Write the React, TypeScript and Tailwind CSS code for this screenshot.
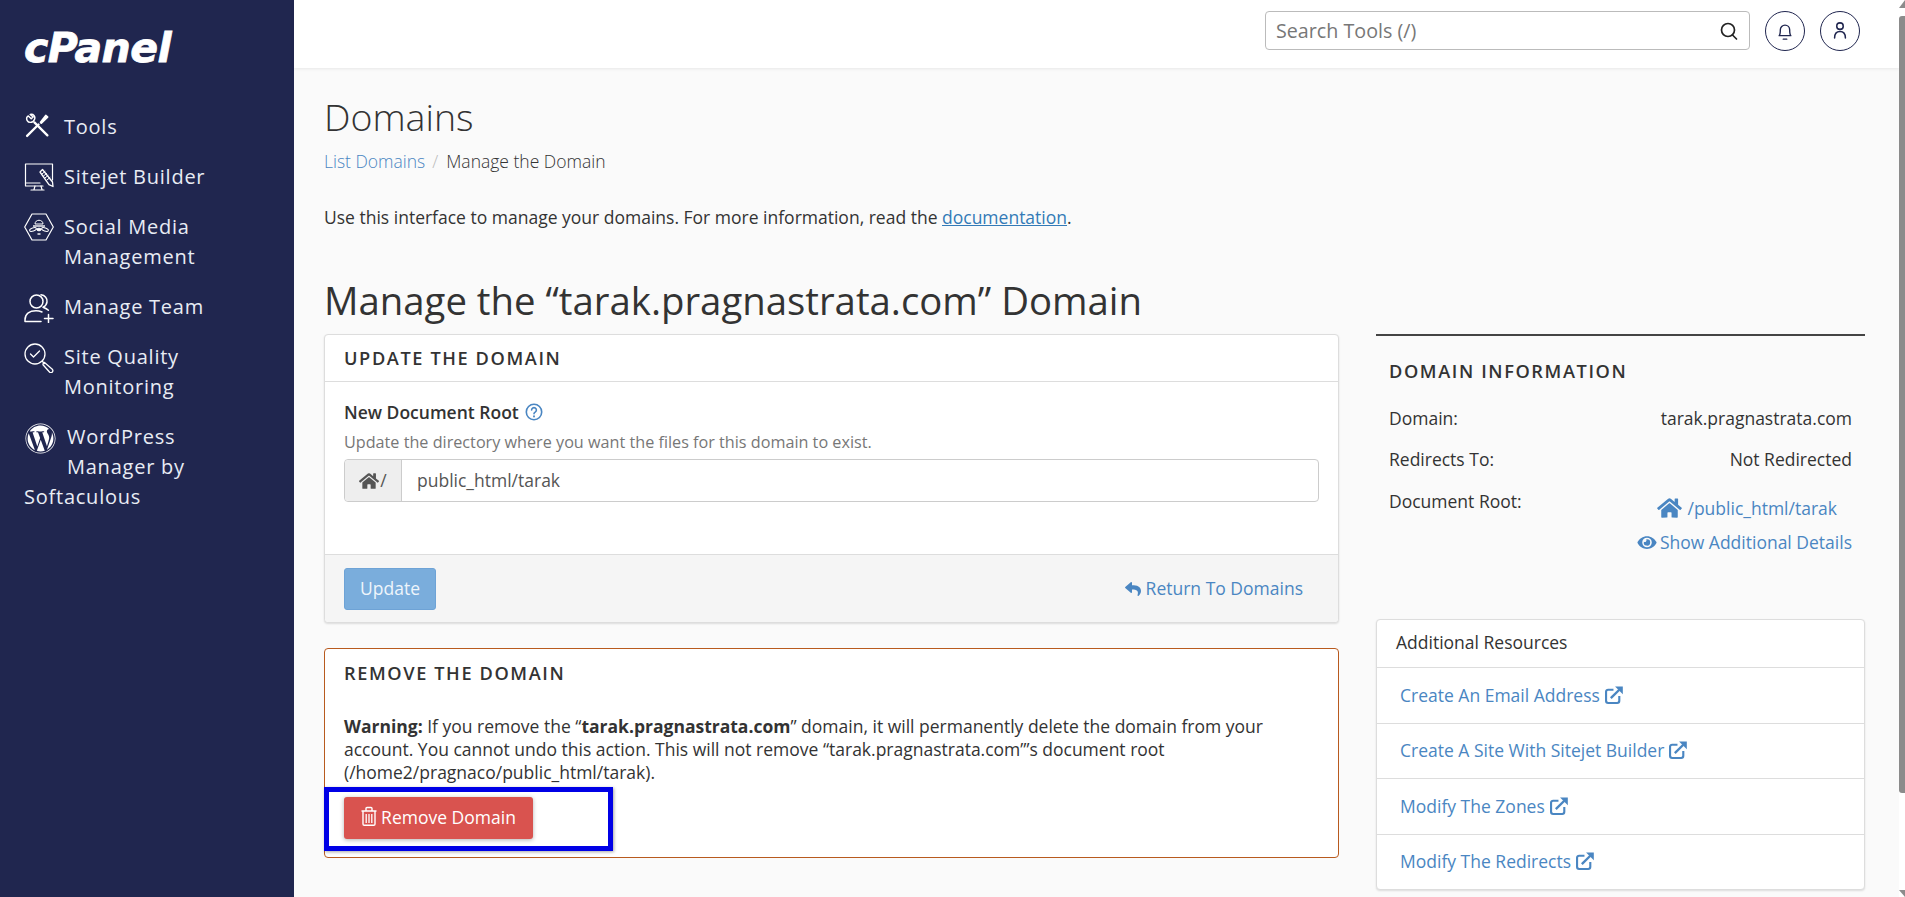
import React from 'react';
import { FaHome, FaEye, FaReply, FaWordpress } from 'react-icons/fa';

const ToolsIcon = () => (
  <svg viewBox="0 0 24 24" className="h-[25px] w-[25px] ml-[1px]" fill="none" stroke="white" strokeWidth="1.8" strokeLinecap="round" strokeLinejoin="round">
    <path d="M9 9l12.5 12.5" strokeWidth="2.2" />
    <path d="M3.2 2.8 6 5.6 7.8 3.8 5 1.4C8 .5 10.2 3.2 9.2 6 8.6 7.8 7.2 9 5 9 2.5 9 .8 6 2 3.8z" strokeWidth="1.4" fill="none" />
    <path d="M2 22 13 11" strokeWidth="2.2" />
    <path d="M15 9l5-6.5 1.6 1.4L15.6 9.6z" fill="white" />
  </svg>
);

const MonitorIcon = () => (
  <svg viewBox="0 0 30 30" className="h-[30px] w-[30px]" fill="none" stroke="white" strokeWidth="1.2" strokeLinejoin="round" strokeLinecap="round">
    <path d="M19 23H1.5V1h27v16" />
    <path d="M1.5 20H16" />
    <path d="M11 23l-1 3.5M17 23l1 3.5M7 27h13" />
    <path d="M16 9l2.5-2.5L28.5 19l.5 4.5-4-1.8z" strokeWidth="1.3" />
    <path d="M18 11l3-2.5M19.5 13l3-2.5M21 15l3-2.5M23 17l3-2.5" strokeWidth="1" />
  </svg>
);

const SocialIcon = () => (
  <svg viewBox="0 0 30 28" className="h-[28px] w-[30px]" fill="none" stroke="white" strokeWidth="1" strokeLinejoin="round">
    <path d="M8 1h14l7.3 13L22 27H8L.7 14z" strokeWidth="1.2" />
    <path d="M11 11c0-5 8-5 8 0z" />
    <path d="M9 13h12" strokeWidth="1.4" />
    <ellipse cx="9" cy="16.5" rx="3.5" ry="1.6" transform="rotate(-18 9 16.5)" />
    <ellipse cx="21" cy="16.5" rx="3.5" ry="1.6" transform="rotate(18 21 16.5)" />
    <ellipse cx="15" cy="16.5" rx="2.2" ry="1.3" fill="white" />
    <path d="M13.5 21h3" strokeWidth="1.4" />
  </svg>
);

const TeamIcon = () => (
  <svg viewBox="0 0 30 30" className="h-[30px] w-[30px]" fill="none" stroke="white" strokeWidth="1.5" strokeLinecap="round" strokeLinejoin="round">
    <circle cx="12.5" cy="8.5" r="6.5" />
    <path d="M17 1.8c4 .5 6.5 3.5 6 7-.3 2.5-2 4.5-4 5.4 2 .8 4 1.6 5.4 3" />
    <path d="M18 19c-2-.9-3.5-1.3-6-1.3C6 17.700 1 20.500 1 27v1.500h16" />
    <path d="M24.500 21.500v8M20.500 25.500h8.500" />
  </svg>
);

const QualityIcon = () => (
  <svg viewBox="0 0 30 30" className="h-[30px] w-[30px]" fill="none" stroke="white" strokeWidth="1.3" strokeLinecap="round" strokeLinejoin="round">
    <circle cx="11" cy="11" r="10" />
    <path d="M6.500 11l3 3 6-6" />
    <path d="M18.500 18.500l2 2" />
    <path d="M20.500 19.500l7.800 6.800a2 2 0 0 1-2.600 3l-6.700-7.600a2 2 0 0 1 1.500-2.200z" />
  </svg>
);

const ExternalIcon = () => (
  <svg viewBox="0 0 17 17" className="ml-[5px] inline-block h-[18px] w-[18px] align-[-2px]" fill="none" stroke="#4a86c2">
    <path d="M8 3.500H3a2 2 0 0 0-2 2V14a2 2 0 0 0 2 2h8.500a2 2 0 0 0 2-2V9.500" strokeWidth="2" />
    <path d="M5.500 11.500 13.500 3.500" strokeWidth="2.200" />
    <path d="M9.500.500H16.800V7.800z" fill="#4a86c2" stroke="none" />
  </svg>
);

const TrashIcon = () => (
  <svg viewBox="0 0 16 20" className="h-[20px] w-[16px] -translate-y-[2px]" fill="none" stroke="#fff">
    <path d="M.500 5h15M5 5V2.500a1 1 0 0 1 1-1h4a1 1 0 0 1 1 1V5" strokeWidth="1.400" />
    <path d="M2 5v13a1.200 1.200 0 0 0 1.200 1.200h9.600A1.200 1.200 0 0 0 14 18V5" strokeWidth="1.400" />
    <path d="M5.200 8v9M8 8v9M10.800 8v9" strokeWidth="1.300" />
  </svg>
);

const navItems = [
  { label: 'Tools', icon: <ToolsIcon /> },
  { label: 'Sitejet Builder', icon: <MonitorIcon /> },
  { label: 'Social Media Management', icon: <SocialIcon /> },
  { label: 'Manage Team', icon: <TeamIcon /> },
  { label: 'Site Quality Monitoring', icon: <QualityIcon /> },
];

const resources = ['Create An Email Address', 'Create A Site With Sitejet Builder', 'Modify The Zones', 'Modify The Redirects'];

const panelTitle = 'text-[18.2px] font-semibold uppercase tracking-[1.6px] text-[#333]';

export default function App() {
  return (
    <div className="flex h-screen w-full overflow-hidden bg-[#fafafa] font-['Open_Sans',sans-serif] text-[17.5px] text-[#333]">
      <aside className="w-[294px] shrink-0 bg-[#20264f] px-[24px] text-[20px] leading-[30px] tracking-[0.76px] text-[#e8ecf4]">
        <div className="h-[112px] pt-[26px]">
          <span className="block font-['DejaVu_Sans',sans-serif] text-[41px] font-bold italic leading-[44px] tracking-[-0.6px] text-white [-webkit-text-stroke:0.8px_white]">cPanel</span>
        </div>
        <nav className="flex flex-col gap-[19.5px]">
          {navItems.map((item) => (
            <div key={item.label} className="flex items-start">
              <span className="flex w-[40px] shrink-0 pt-[1px]">{item.icon}</span>
              <span className="w-[170px]">{item.label}</span>
            </div>
          ))}
          <div>
            <span className="float-left h-[60px] w-[43px] pl-[1px] pt-[1px]">
              <FaWordpress className="h-[31px] w-[31px] text-white" />
            </span>
            WordPress
            <br />
            Manager by
            <br />
            Softaculous
          </div>
        </nav>
      </aside>

      <main className="flex min-w-0 flex-1 flex-col">
        <header className="flex h-[68px] shrink-0 items-start justify-end gap-[15px] bg-white pr-[39px] pt-[11px] shadow-[0_1px_3px_rgba(0,0,0,0.08)]">
          <div className="flex h-[39px] w-[485px] items-center justify-between rounded-[4px] border border-[#bbb] pl-[10px] pr-[10px] text-[19.700px] text-[#777]">
            <span>Search Tools (/)</span>
            <svg viewBox="0 0 20 20" className="h-[20px] w-[20px]" fill="none" stroke="#222" strokeWidth="1.700" strokeLinecap="round">
              <circle cx="9" cy="9" r="6.500" />
              <path d="M13.500 14l4 4" />
            </svg>
          </div>
          <div className="flex h-[40px] w-[40px] items-center justify-center rounded-full border border-[#20264f]">
            <svg viewBox="0 0 24 24" className="h-[28px] w-[28px]" fill="none" stroke="#20264f" strokeWidth="1.200" strokeLinecap="round" strokeLinejoin="round">
              <path d="M7 16c1-1 1-2 1-5a4 4 0 0 1 8 0c0 3 0 4 1 5z" />
              <path d="M10.500 19h3" />
            </svg>
          </div>
          <div className="flex h-[40px] w-[40px] items-center justify-center rounded-full border border-[#20264f]">
            <svg viewBox="0 0 24 24" className="h-[26px] w-[26px]" fill="none" stroke="#20264f" strokeWidth="1.400" strokeLinecap="round">
              <circle cx="12" cy="7.500" r="3" />
              <path d="M7 18.500c0-4 2-6 5-6s5 2 5 6" />
            </svg>
          </div>
        </header>

        <div className="flex-1 pl-[30px] pr-[34px]">
          <h1 className="mt-[27px] text-[37.500px] font-light leading-[44px]">Domains</h1>
          <div className="mt-[10px] flex font-light leading-[24px]">
            <span className="text-[#4a86c2]">List Domains</span>
            <span className="ml-[7px] mr-[8px] text-[#bbb]">/</span>
            <span>Manage the Domain</span>
          </div>
          <p className="mt-[32px] leading-[24px]">
            Use this interface to manage your domains. For more information, read the{' '}
            <span className="text-[#337ab7] underline">documentation</span>.
          </p>
          <h2 className="mt-[49px] text-[38.350px] leading-[44px]">Manage the “tarak.pragnastrata.com” Domain</h2>

          <div className="mt-[12px] flex items-start gap-[37px]">
            <div className="w-[1015px] shrink-0">
              <section className="rounded-[4px] border border-[#ddd] bg-white shadow-[0_1px_2px_rgba(0,0,0,0.12)]">
                <div className="flex h-[47px] items-center border-b border-[#ddd] px-[19px] pt-[1px]">
                  <span className={panelTitle}>Update the Domain</span>
                </div>
                <div className="h-[172px] px-[19px] pt-[18px]">
                  <div className="flex items-center gap-[6px] font-semibold leading-[24px]">
                    New Document Root
                    <svg viewBox="0 0 18 18" className="h-[18px] w-[18px]" fill="none" stroke="#4a86c2" strokeWidth="1.600" strokeLinecap="round">
                      <circle cx="9" cy="9" r="7.700" />
                      <path d="M6.600 7a2.400 2.400 0 1 1 3.600 2.100c-.8.500-1.200.9-1.200 1.700" />
                      <path d="M9 13.300v.2" strokeWidth="1.900" />
                    </svg>
                  </div>
                  <div className="mt-[7px] text-[16.200px] leading-[22px] text-[#777]">Update the directory where you want the files for this domain to exist.</div>
                  <div className="mt-[6px] flex h-[43px] rounded-[4px] border border-[#ccc]">
                    <span className="flex w-[57px] items-center justify-center gap-[1px] rounded-l-[4px] border-r border-[#ccc] bg-[#eee] text-[#555]">
                      <FaHome className="h-[18px] w-[20px]" />/
                    </span>
                    <span className="flex items-center pl-[15px] text-[#555]">public_html/tarak</span>
                  </div>
                </div>
                <div className="flex h-[68px] items-center justify-between rounded-b-[4px] border-t border-[#ddd] bg-[#f5f5f5] pl-[19px] pr-[35px]">
                  <button className="h-[42px] w-[92px] rounded-[3px] border border-[#6ea3d6] bg-[#7aaddc] text-[#eef5fb]">Update</button>
                  <span className="flex items-center gap-[4px] text-[#4a86c2]">
                    <FaReply className="h-[16px] w-[18px]" />
                    Return To Domains
                  </span>
                </div>
              </section>

              <section className="relative mt-[25px] h-[210px] rounded-[4px] border border-[#b85a1e] bg-white px-[19px]">
                <div className="flex h-[48px] items-center pt-[1px]">
                  <span className={panelTitle}>Remove the Domain</span>
                </div>
                <p className="mt-[18px] leading-[23px]">
                  <strong className="font-bold">Warning:</strong> If you remove the “<strong className="font-bold">tarak.pragnastrata.com</strong>” domain, it will permanently delete the domain from your account. You cannot undo this action. This will not remove “tarak.pragnastrata.com”’s document root (/home2/pragnaco/public_html/tarak).
                </p>
                <button className="mt-[13px] flex h-[42px] w-[189px] items-center justify-center gap-[4px] rounded-[3px] bg-[#d9534f] pb-[1px] text-white shadow-[0_1px_4px_rgba(0,0,0,0.3)]">
                  <TrashIcon />
                  Remove Domain
                </button>
                <div className="absolute left-[-1px] top-[138px] h-[64px] w-[289px] border-[5px] border-[#0000e6] shadow-[1px_1px_3px_rgba(0,0,0,0.35)]" />
              </section>
            </div>

            <div className="flex-1">
              <div className="h-[285px] border-t-2 border-[#444] px-[13px]">
                <div className={`${panelTitle} mt-[23px] leading-[24px]`}>Domain Information</div>
                <div className="mt-[23px] flex justify-between leading-[24px]">
                  <span>Domain:</span>
                  <span>tarak.pragnastrata.com</span>
                </div>
                <div className="mt-[17px] flex justify-between leading-[24px]">
                  <span>Redirects To:</span>
                  <span>Not Redirected</span>
                </div>
                <div className="mt-[18px] flex justify-between leading-[24px]">
                  <span>Document Root:</span>
                  <div className="flex flex-col items-end text-[#4a86c2]">
                    <span className="mt-[7px] flex items-center gap-[6px] pr-[15px]">
                      <FaHome className="h-[22px] w-[25px]" />/public_html/tarak
                    </span>
                    <span className="mt-[10px] flex items-center gap-[3px]">
                      <FaEye className="h-[17px] w-[20px]" />Show Additional Details
                    </span>
                  </div>
                </div>
              </div>

              <section className="rounded-[4px] border border-[#ddd] bg-white shadow-[0_1px_2px_rgba(0,0,0,0.12)]">
                <div className="flex h-[47px] items-center px-[19px] pb-[2px]">Additional Resources</div>
                {resources.map((r) => (
                  <div key={r} className="flex h-[55.500px] items-center border-t border-[#ddd] px-[23px] pb-[1px] text-[#4a86c2]">
                    <span>{r}<ExternalIcon /></span>
                  </div>
                ))}
              </section>
            </div>
          </div>
        </div>
      </main>

      <div className="flex w-[6px] shrink-0 flex-col justify-between bg-white">
        <div className="h-0 w-0 border-b-[8px] border-l-[6px] border-b-[#8b8b8b] border-l-transparent" />
        <div className="absolute right-0 top-[16px] h-[777px] w-[6px] rounded-l-[3px] bg-[#8b8b8b]" />
        <div className="h-0 w-0 border-t-[7px] border-l-[6px] border-t-[#8b8b8b] border-l-transparent" />
      </div>
    </div>
  );
}
